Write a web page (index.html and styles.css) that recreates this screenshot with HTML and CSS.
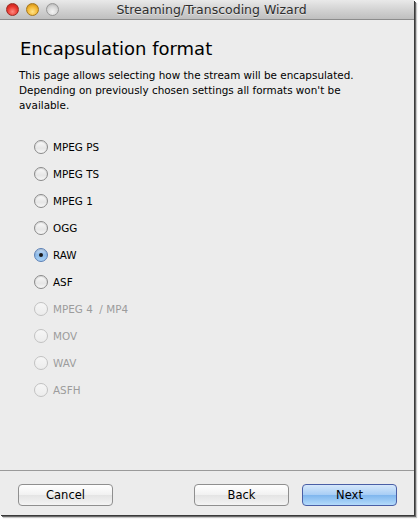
FILE: index.html
```html
<!DOCTYPE html>
<html>
<head>
<meta charset="utf-8">
<link rel="stylesheet" href="styles.css">
</head>
<body>
<div class="window">
  <div class="titlebar">
    <div class="lights">
      <span class="light red"></span>
      <span class="light yellow"></span>
      <span class="light grey"></span>
    </div>
    <div class="title">Streaming/Transcoding Wizard</div>
  </div>
  <div class="content">
    <h1 class="heading">Encapsulation format</h1>
    <p class="desc">This page allows selecting how the stream will be encapsulated. Depending on previously chosen settings all formats won't be available.</p>
    <ul class="options">
      <li class="opt"><span class="radio"></span><span class="label">MPEG PS</span></li>
      <li class="opt"><span class="radio"></span><span class="label">MPEG TS</span></li>
      <li class="opt"><span class="radio"></span><span class="label">MPEG 1</span></li>
      <li class="opt"><span class="radio"></span><span class="label">OGG</span></li>
      <li class="opt"><span class="radio checked"></span><span class="label">RAW</span></li>
      <li class="opt"><span class="radio"></span><span class="label">ASF</span></li>
      <li class="opt disabled"><span class="radio"></span><span class="label">MPEG 4 &nbsp;/ MP4</span></li>
      <li class="opt disabled"><span class="radio"></span><span class="label">MOV</span></li>
      <li class="opt disabled"><span class="radio"></span><span class="label">WAV</span></li>
      <li class="opt disabled"><span class="radio"></span><span class="label">ASFH</span></li>
    </ul>
  </div>
  <div class="footer">
    <button class="btn">Cancel</button>
    <div class="spacer"></div>
    <button class="btn">Back</button>
    <button class="btn primary">Next</button>
  </div>
</div>
</body>
</html>
```
FILE: styles.css
```css
html, body {
  margin: 0;
  padding: 0;
  background: #ffffff;
}
body {
  width: 420px;
  height: 519px;
  overflow: hidden;
  font-family: "DejaVu Sans", "Noto Sans", sans-serif;
}
.window {
  width: 414px;
  height: 515px;
  background: #ececec;
  box-shadow: 1px 1px 0 #3a3a3a, 2px 2px 0 #6a6a6a, 3px 3px 1px #c8c8c8;
  display: flex;
  flex-direction: column;
  box-sizing: border-box;
}
.titlebar {
  height: 20px;
  box-sizing: border-box;
  border-bottom: 1px solid #8c8c8c;
  background: linear-gradient(#e9e9e9, #d3d3d3 50%, #bfbfbf);
  display: flex;
  align-items: center;
  position: relative;
}
.lights {
  display: flex;
  gap: 7px;
  padding-left: 6px;
}
.light {
  width: 13px;
  height: 13px;
  border-radius: 50%;
  box-sizing: border-box;
}
.red {
  background: radial-gradient(circle at 50% 70%, #ff8a80 0%, #e8342c 55%, #b01d16 100%);
  border: 1px solid #9b2a22;
}
.yellow {
  background: radial-gradient(circle at 50% 70%, #ffe48a 0%, #f2b530 55%, #bd7e0f 100%);
  border: 1px solid #a6771a;
}
.grey {
  background: radial-gradient(circle at 50% 70%, #f4f4f4 0%, #d6d6d6 55%, #a9a9a9 100%);
  border: 1px solid #969696;
}
.title {
  flex: 1;
  text-align: center;
  font-size: 12.5px;
  color: #2e2e2e;
  padding-right: 50px;
  text-shadow: 0 1px 0 rgba(255,255,255,0.5);
}
.content {
  flex: 1;
  padding: 17px 0 0 20px;
}
.heading {
  margin: 0;
  font-weight: normal;
  font-size: 18px;
  line-height: 24px;
  color: #000;
}
.desc {
  margin: 7px 0 0 -1px;
  width: 370px;
  font-size: 10.4px;
  line-height: 15px;
  color: #000;
}
.options {
  list-style: none;
  margin: 26px 0 0 14px;
  padding: 0;
  display: flex;
  flex-direction: column;
  gap: 11px;
}
.opt {
  display: flex;
  align-items: center;
  height: 16px;
  font-size: 10.4px;
  color: #000;
}
.radio {
  width: 14px;
  height: 14px;
  border-radius: 50%;
  box-sizing: border-box;
  border: 1px solid #8a8a8a;
  background: linear-gradient(#fbfbfb, #e6e6e6 60%, #f7f7f7);
  margin-right: 5px;
  position: relative;
  box-shadow: inset 0 1px 1px rgba(0,0,0,0.15);
}
.radio.checked {
  border-color: #5a7fb5;
  background: linear-gradient(#c9def5, #8dbbea 50%, #a8d0f4);
}
.radio.checked::after {
  content: "";
  position: absolute;
  left: 4px;
  top: 4px;
  width: 4px;
  height: 4px;
  border-radius: 50%;
  background: #1a1a1a;
}
.opt.disabled {
  color: #9c9c9c;
}
.opt.disabled .radio {
  border-color: #c2c2c2;
  background: linear-gradient(#f6f6f6, #ececec);
  box-shadow: none;
}
.footer {
  height: 45px;
  box-sizing: border-box;
  border-top: 1px solid #9a9a9a;
  display: flex;
  align-items: flex-start;
  padding: 13px 17px 0 18px;
  gap: 13px;
}
.spacer {
  flex: 1;
}
.btn {
  width: 95px;
  height: 22px;
  box-sizing: border-box;
  border: 1px solid #8f8f8f;
  border-radius: 4px;
  background: linear-gradient(#ffffff, #f1f1f1 50%, #e4e4e4 51%, #f4f4f4);
  font-family: "DejaVu Sans", sans-serif;
  font-size: 11.5px;
  color: #000;
  padding: 0;
}
.btn.primary {
  border-color: #4a5fa6;
  background: linear-gradient(#d6e8fb, #a7cdf5 50%, #7fb6ee 51%, #b4dbfb);
}
```
